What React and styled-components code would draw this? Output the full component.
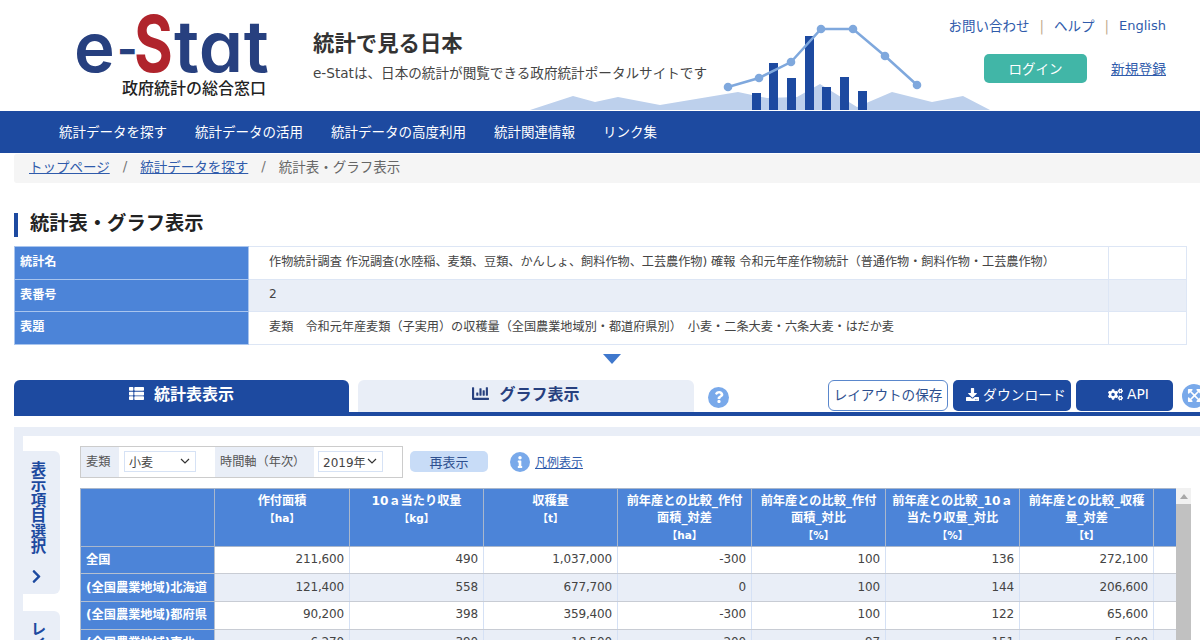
import React from 'react';
import styled, { createGlobalStyle } from 'styled-components';
import { FaThList, FaChartBar, FaQuestion, FaDownload, FaCogs, FaExpandArrowsAlt, FaChevronRight, FaInfo } from 'react-icons/fa';

const BLUE = '#1d4aa0';
const MID = '#4c84d8';
const PALE = '#e9eef7';
const LINK = '#2f5bab';

const Global = createGlobalStyle`
  html, body { margin: 0; padding: 0; background: #fff; }
  body { font-family: "DejaVu Sans", "Noto Sans CJK JP", sans-serif; color: #444; }
  * { box-sizing: border-box; }
`;
const Page = styled.div`
  width: 1200px; height: 640px; overflow: hidden; position: relative;
`;
const Header = styled.header`
  height: 111px; position: relative; display: flex; align-items: flex-start; padding-left: 77px;
`;
const Logo = styled.div`
  width: 236px; flex: none; display: flex; flex-direction: column;
`;
const LogoMark = styled.div`
  height: 80px; margin-left: -3px; display: flex; align-items: baseline; padding-top: 8px;
  font-family: Inter, "Liberation Sans", sans-serif; font-feature-settings: "cv11" 1;
  font-size: 69px; line-height: 72px; color: #27407f; font-weight: 600;
`;
const LogoE = styled.span`
  display: inline-block; width: 43px;
`;
const LogoDash = styled.span`
  display: inline-block; width: 17px; font-size: 44px; font-weight: 700; transform: translateY(-7px);
`;
const LogoS = styled.span`
  display: inline-block; width: 40px; color: #b0242c; font-weight: 700; font-size: 78px;
  transform-origin: left bottom; transform: scaleX(0.76);
`;
const LogoRest = styled.span`
  display: inline-block; font-size: 71px; letter-spacing: 0.5px;
`;
const LogoCaption = styled.div`
  margin-top: 0; margin-left: 45px; font-size: 16px; line-height: 18px; font-weight: 500; color: #222; white-space: nowrap;
`;
const Lead = styled.div`
  width: 420px; flex: none; padding-top: 30px; position: relative; z-index: 1;
`;
const LeadTitle = styled.div`
  font-size: 21.4px; line-height: 28px; font-weight: 700; color: #333; white-space: nowrap;
`;
const LeadText = styled.div`
  margin-top: 5px; font-size: 13.6px; line-height: 20px; color: #444; white-space: nowrap;
`;
const Chart = styled.svg`
  position: absolute; left: 520px; top: 0; width: 480px; height: 111px;
`;
const HeaderRight = styled.div`
  position: absolute; right: 34px; top: 16px; display: flex; flex-direction: column; align-items: flex-end; gap: 18px;
`;
const TopLinks = styled.div`
  display: flex; align-items: center; gap: 10px; font-size: 13.5px; line-height: 20px; color: ${LINK};
`;
const TopSep = styled.span`color: #c4ab90;`;
const English = styled.span`font-size: 13px;`;
const LoginRow = styled.div`
  display: flex; align-items: center; gap: 24px;
`;
const Login = styled.div`
  width: 103px; height: 29px; border-radius: 5px; background: #41b6a7; color: #fff; font-size: 13.5px; padding-bottom: 2px;
  display: flex; align-items: center; justify-content: center;
`;
const Register = styled.a`
  color: ${LINK}; text-decoration: underline; font-size: 13.75px; margin-bottom: 2px;
`;
const Nav = styled.nav`
  height: 42px; background: ${BLUE}; display: flex; align-items: center; gap: 28px; padding: 0 0 2px 59px;
  color: #fff; font-size: 13.5px;
`;
const Crumbs = styled.div`
  height: 29px; margin: 1px 0 0 14px; padding: 0 0 5px 15px; background: #f5f5f5; display: flex; align-items: center;
  font-size: 13.5px; color: #666; border-radius: 3px 0 0 3px;
`;
const CrumbLink = styled.a`color: ${LINK}; text-decoration: underline;`;
const CrumbSep = styled.span`margin: 0 13px; color: #777;`;
const Title = styled.h1`
  margin: 30px 0 0 14px; height: 24px; padding: 0 0 2px 12px; border-left: 4px solid ${BLUE};
  font-size: 19.3px; line-height: 22px; font-weight: 700; color: #222; white-space: nowrap;
`;
const InfoTable = styled.table`
  margin: 9px 0 0 14px; width: 1173px; border-collapse: collapse; table-layout: fixed; font-size: 12.15px;
`;
const InfoRow = styled.tr`
  height: 32.6px; background: ${p => (p.$alt ? PALE : '#fff')};
`;
const InfoLabel = styled.th`
  width: 234px; background: ${MID}; color: #fff; text-align: left; font-weight: 700; padding: 0 0 4px 5px;
  border: 1px solid #a9c5ee;
`;
const InfoCell = styled.td`
  padding: 0 0 ${p => (p.$num ? 3 : 4)}px 20px; color: #444; border: 1px solid #dde6f5; white-space: nowrap;
`;
const InfoEnd = styled.td`
  width: 78px; border: 1px solid #dde6f5;
`;
const Toggle = styled.div`
  margin: 9px 0 0 603px; width: 0; height: 0;
  border-left: 9.5px solid transparent; border-right: 9.5px solid transparent; border-top: 10px solid #3f78cd;
`;
const TabBar = styled.div`
  margin-top: 16px; margin-left: 14px; height: 36px; width: 1300px; border-bottom: 4px solid ${BLUE};
  display: flex; align-items: flex-start;
`;
const Tab = styled.div`
  width: ${p => p.$w}px; height: ${p => (p.$active ? 36 : 32)}px; flex: none; margin-right: ${p => p.$mr || 0}px;
  border-radius: 6px 6px 0 0; background: ${p => (p.$active ? BLUE : PALE)}; color: ${p => (p.$active ? '#fff' : '#27407f')};
  display: flex; align-items: center; justify-content: center; gap: 10px;
  font-size: 16px; font-weight: 700; padding-bottom: ${p => (p.$active ? 9 : 5)}px;
`;
const RoundIcon = styled.div`
  width: ${p => p.$s}px; height: ${p => p.$s}px; border-radius: 50%; background: #79a9ea; color: #fff; flex: none;
  display: flex; align-items: center; justify-content: center; font-size: ${p => p.$f}px;
  margin: ${p => p.$m};
`;
const GhostBtn = styled.div`
  width: 120px; height: 31px; flex: none; border: 1px solid #5a87cc; border-radius: 6px; background: #fff; color: #2d4f8f;
  font-size: 13.6px; padding-bottom: 2px; display: flex; align-items: center; justify-content: center; margin-right: 5px; white-space: nowrap;
`;
const SolidBtn = styled.div`
  width: ${p => p.$w}px; height: 31px; flex: none; border-radius: 5px; background: ${BLUE}; color: #fff;
  font-size: 13.8px; padding: 0 0 2px 8px; display: flex; align-items: center; justify-content: center; gap: 4px; margin-right: 5px; white-space: nowrap;
`;
const Panel = styled.section`
  margin: 11px 0 0 14px; width: 1300px; height: 300px; background: ${PALE}; padding: 9px 0 0 9px;
`;
const PanelInner = styled.div`
  background: #fff; height: 100%; display: flex; align-items: flex-start; padding-top: 10px;
`;
const SideCol = styled.div`
  width: 37px; flex: none; display: flex; flex-direction: column; gap: 17px; padding-top: 5px;
`;
const SideTab = styled.div`
  background: ${PALE}; border-radius: 0 6px 6px 0; width: 37px; height: ${p => p.$h}px; padding-top: 10px; padding-right: 10px;
  display: flex; flex-direction: column; align-items: center; color: ${BLUE};
`;
const SideText = styled.div`
  writing-mode: vertical-rl; font-size: 15.5px; line-height: 18px; font-weight: 700; white-space: nowrap;
`;
const SideChevron = styled.div`margin-top: 15px; font-size: 15px; line-height: 15px;`;
const Main = styled.div`
  margin-left: 20px; flex: none; width: 1112px;
`;
const FilterRow = styled.div`
  display: flex; align-items: center; height: 32px;
`;
const FilterBox = styled.div`
  width: 323px; height: 32px; border: 1px solid #ccc; display: flex; align-items: stretch; font-size: 12.2px; color: #555; flex: none;
`;
const FilterLabel = styled.div`
  background: ${PALE}; width: ${p => p.$w}px; flex: none; display: flex; align-items: center; padding: 0 0 1px 5px; white-space: nowrap; margin-left: ${p => p.$ml || 0}px;
`;
const Select = styled.div`
  width: ${p => p.$w}px; height: 21px; align-self: center; margin-left: ${p => p.$ml || 5}px; border: 1px solid #d6e2f5; flex: none;
  display: flex; align-items: center; justify-content: space-between; padding: 0 5px 1px 4px; color: #444; font-size: 12px; white-space: nowrap;
`;
const Chev = styled.svg`width: 10px; height: 6px; flex: none;`;
const Redisplay = styled.div`
  width: 78px; height: 21px; margin-left: 7px; border-radius: 5px; background: #c8dcf7; color: #2d4f8f; font-size: 13px; flex: none;
  display: flex; align-items: center; justify-content: center;
`;
const Legend = styled.a`
  margin-left: 5px; font-size: 12px; color: ${LINK}; text-decoration: underline;
`;
const TableWrap = styled.div`
  margin-top: 10px; display: flex; align-items: flex-start;
`;
const Clip = styled.div`
  width: 1096px; height: 160px; overflow: hidden; flex: none;
`;
const DataTable = styled.table`
  border-collapse: collapse; table-layout: fixed; width: 1208px; font-size: 12px;
`;
const Head = styled.th`
  width: ${p => p.$w || 134}px; height: 58px; background: ${MID}; color: #fff; font-size: 12.2px; line-height: 17px; font-weight: 700;
  vertical-align: top; padding: 4px 5px 0; border: 1px solid #a9b7cc; text-align: center; overflow: hidden;
`;
const Unit = styled.div`font-size: 10.5px;`;
const Row = styled.tr`
  height: 27.6px; background: ${p => (p.$alt ? PALE : '#fff')};
`;
const RowHead = styled.th`
  background: ${MID}; color: #fff; text-align: left; font-size: 12.2px; font-weight: 700; padding: 0 0 2px 5px;
  border: 1px solid #b5c0d0; white-space: nowrap; overflow: hidden;
`;
const Num = styled.td`
  text-align: right; padding: 0 5px 2px 0; color: #444; white-space: nowrap; letter-spacing: -0.15px;
  border-left: 1px solid #d5e1f5; border-right: 1px solid #d5e1f5; border-bottom: 1px solid #c8ccd4;
`;
const Scroll = styled.div`
  width: 15px; height: 160px; background: #f1f1f1; flex: none; display: flex; flex-direction: column; align-items: center;
`;
const ScrollUp = styled.div`
  width: 0; height: 0; margin: 6px 0 5px; border-left: 4px solid transparent; border-right: 4px solid transparent; border-bottom: 5px solid #a8a8a8;
`;
const Thumb = styled.div`width: 15px; flex: 1; background: #c1c1c1;`;

const heads = [
  ['作付面積', '【ha】'],
  ['10ａ当たり収量', '【kg】'],
  ['収穫量', '【t】'],
  ['前年産との比較_作付面積_対差', '【ha】'],
  ['前年産との比較_作付面積_対比', '【%】'],
  ['前年産との比較_10ａ当たり収量_対比', '【%】'],
  ['前年産との比較_収穫量_対差', '【t】'],
  ['前年産との比較', ''],
];
const rows = [
  ['全国', '211,600', '490', '1,037,000', '-300', '100', '136', '272,100'],
  ['(全国農業地域)北海道', '121,400', '558', '677,700', '0', '100', '144', '206,600'],
  ['(全国農業地域)都府県', '90,200', '398', '359,400', '-300', '100', '122', '65,600'],
  ['(全国農業地域)東北', '6,270', '390', '19,500', '-200', '97', '151', '5,900'],
];

const Chevron = () => (
  <Chev viewBox="0 0 10 6"><path d="M1 1l4 4 4-4" fill="none" stroke="#333" strokeWidth="1.2" /></Chev>
);

export default function App() {
  const line = [[728, 87], [759, 78], [791, 62], [821, 29], [853, 29], [885, 56], [917, 85]];
  const bars = [[752, 93], [769, 63], [787, 78], [805, 36], [822, 87], [840, 77], [858, 91]];
  return (
    <Page>
      <Global />
      <Header>
        <Chart viewBox="520 0 480 111">
          <polygon fill="#bdd0ec" points="530,110 573,96 595,102 618,97 660,105 738,92 767,98 797,97 820,84 857,107 892,92 932,102 963,96 990,110" />
          {bars.map(([x, y]) => <rect key={x} x={x} y={y} width="9" height={110 - y} fill={BLUE} />)}
          <polyline fill="none" stroke="#7fa8dd" strokeWidth="2.5" points={line.map(p => p.join(',')).join(' ')} />
          {line.map(([x, y]) => <circle key={x} cx={x} cy={y} r="4.3" fill="#7fa8dd" />)}
        </Chart>
        <Logo>
          <LogoMark><LogoE>e</LogoE><LogoDash>-</LogoDash><LogoS>S</LogoS><LogoRest>tat</LogoRest></LogoMark>
          <LogoCaption>政府統計の総合窓口</LogoCaption>
        </Logo>
        <Lead>
          <LeadTitle>統計で見る日本</LeadTitle>
          <LeadText>e-Statは、日本の統計が閲覧できる政府統計ポータルサイトです</LeadText>
        </Lead>
        <HeaderRight>
          <TopLinks>
            <span>お問い合わせ</span><TopSep>|</TopSep><span>ヘルプ</span><TopSep>|</TopSep><English>English</English>
          </TopLinks>
          <LoginRow>
            <Login>ログイン</Login>
            <Register>新規登録</Register>
          </LoginRow>
        </HeaderRight>
      </Header>
      <Nav>
        <span>統計データを探す</span>
        <span>統計データの活用</span>
        <span>統計データの高度利用</span>
        <span>統計関連情報</span>
        <span>リンク集</span>
      </Nav>
      <Crumbs>
        <CrumbLink>トップページ</CrumbLink><CrumbSep>/</CrumbSep>
        <CrumbLink>統計データを探す</CrumbLink><CrumbSep>/</CrumbSep>
        <span>統計表・グラフ表示</span>
      </Crumbs>
      <Title>統計表・グラフ表示</Title>
      <InfoTable>
        <tbody>
          <InfoRow>
            <InfoLabel>統計名</InfoLabel>
            <InfoCell>作物統計調査 作況調査(水陸稲、麦類、豆類、かんしょ、飼料作物、工芸農作物) 確報 令和元年産作物統計（普通作物・飼料作物・工芸農作物）</InfoCell>
            <InfoEnd />
          </InfoRow>
          <InfoRow $alt>
            <InfoLabel>表番号</InfoLabel>
            <InfoCell $num>2</InfoCell>
            <InfoEnd />
          </InfoRow>
          <InfoRow>
            <InfoLabel>表題</InfoLabel>
            <InfoCell>麦類　令和元年産麦類（子実用）の収穫量（全国農業地域別・都道府県別）　小麦・二条大麦・六条大麦・はだか麦</InfoCell>
            <InfoEnd />
          </InfoRow>
        </tbody>
      </InfoTable>
      <Toggle />
      <TabBar>
        <Tab $active $w={335} $mr={9}><FaThList size={15} />統計表表示</Tab>
        <Tab $w={336}><FaChartBar size={17} />グラフ表示</Tab>
        <RoundIcon $s={21} $f={12} $m="7px 99px 0 14px"><FaQuestion /></RoundIcon>
        <GhostBtn>レイアウトの保存</GhostBtn>
        <SolidBtn $w={118}><FaDownload size={13} />ダウンロード</SolidBtn>
        <SolidBtn $w={97}><FaCogs size={15} />API</SolidBtn>
        <RoundIcon $s={24} $f={15} $m="4px 0 0 4px"><FaExpandArrowsAlt /></RoundIcon>
      </TabBar>
      <Panel>
        <PanelInner>
          <SideCol>
            <SideTab $h={143}>
              <SideText>表示項目選択</SideText>
              <SideChevron><FaChevronRight /></SideChevron>
            </SideTab>
            <SideTab $h={80}>
              <SideText>レイアウト設定</SideText>
            </SideTab>
          </SideCol>
          <Main>
            <FilterRow>
              <FilterBox>
                <FilterLabel $w={38}>麦類</FilterLabel>
                <Select $w={72}>小麦<Chevron /></Select>
                <FilterLabel $w={99} $ml={19}>時間軸（年次）</FilterLabel>
                <Select $w={65} $ml={4}>2019年<Chevron /></Select>
              </FilterBox>
              <Redisplay>再表示</Redisplay>
              <RoundIcon $s={20} $f={12} $m="0 0 0 22px"><FaInfo /></RoundIcon>
              <Legend>凡例表示</Legend>
            </FilterRow>
            <TableWrap>
              <Clip>
                <DataTable>
                  <thead>
                    <tr>
                      <Head />
                      {heads.map(([t, u], i) => (
                        <Head key={i} $w={i === 0 ? 135 : 134}>{t}{u && <Unit>{u}</Unit>}</Head>
                      ))}
                    </tr>
                  </thead>
                  <tbody>
                    {rows.map((r, i) => (
                      <Row key={i} $alt={i % 2 === 1}>
                        <RowHead>{r[0]}</RowHead>
                        {r.slice(1).map((v, j) => <Num key={j}>{v}</Num>)}
                        <Num />
                      </Row>
                    ))}
                  </tbody>
                </DataTable>
              </Clip>
              <Scroll><ScrollUp /><Thumb /></Scroll>
            </TableWrap>
          </Main>
        </PanelInner>
      </Panel>
    </Page>
  );
}
